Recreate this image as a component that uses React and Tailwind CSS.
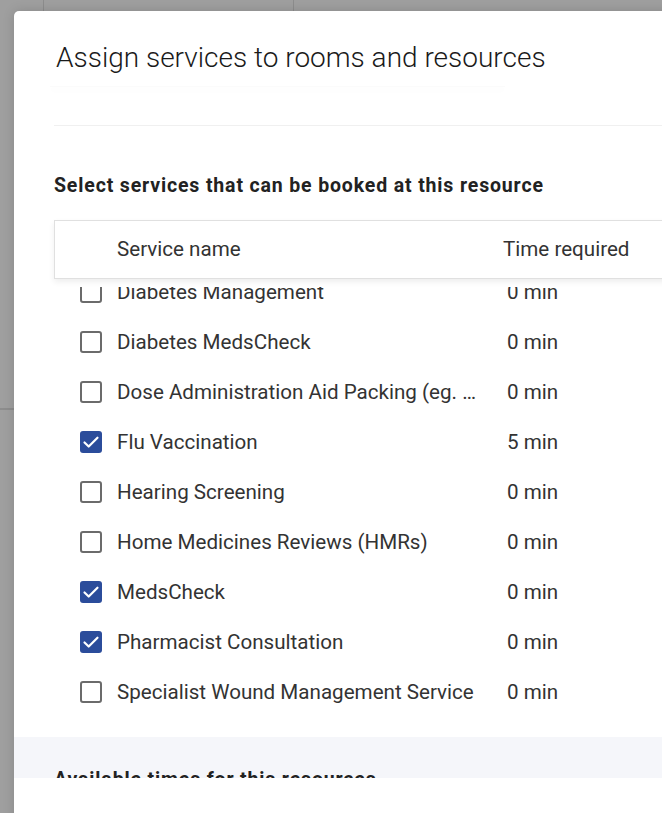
import { useState } from "react";

const services = [
  { name: "Diabetes Management", time: "0 min", checked: false },
  { name: "Diabetes MedsCheck", time: "0 min", checked: false },
  { name: "Dose Administration Aid Packing (eg. Webster-pak)", time: "0 min", checked: false },
  { name: "Flu Vaccination", time: "5 min", checked: true },
  { name: "Hearing Screening", time: "0 min", checked: false },
  { name: "Home Medicines Reviews (HMRs)", time: "0 min", checked: false },
  { name: "MedsCheck", time: "0 min", checked: true },
  { name: "Pharmacist Consultation", time: "0 min", checked: true },
  { name: "Specialist Wound Management Service", time: "0 min", checked: false },
];

function Checkbox({ checked, onClick }) {
  if (checked) {
    return (
      <button onClick={onClick} className="w-[22px] h-[22px] shrink-0 rounded-[3px] bg-[#2b4c9b] flex items-center justify-center">
        <svg width="22" height="22" viewBox="0 0 22 22" fill="none">
          <path d="M4.5 11.5l4.2 4 8.8-8.8" stroke="white" strokeWidth="2.2" strokeLinecap="round" strokeLinejoin="round" />
        </svg>
      </button>
    );
  }
  return <button onClick={onClick} className="w-[22px] h-[22px] shrink-0 rounded-[3px] border-2 border-[#6b6b6b] bg-white" />;
}

export default function App() {
  const [rows, setRows] = useState(services);

  const toggle = i => setRows(rows.map((r, j) => (j === i ? { ...r, checked: !r.checked } : r)));

  return (
    <div className="relative h-[813px] w-full overflow-hidden bg-[#9f9f9f] font-['Roboto',sans-serif]">
      {/* pagina de fondo */}
      <div className="flex h-full">
        <div className="w-[44px] border-r border-[#8d8d8d] flex flex-col">
          <div className="h-[410px] border-b-2 border-[#8d8d8d]" />
        </div>
        <div className="w-[250px] border-r border-[#8d8d8d]" />
      </div>

      {/* Modal */}
      <div className="absolute left-[14px] top-[11px] w-[720px] h-[900px] bg-white rounded-[5px] shadow-[0_0_12px_rgba(0,0,0,0.15)] flex flex-col">
        <div className="pt-[29px]">
          <h1 className="pl-[42px] h-[36px] leading-[36px] text-[28px] font-light text-[#1a1a1a]">
            Assign services to rooms and resources
          </h1>
          <div className="mt-[10px] ml-[36px] w-[455px] h-px bg-[#fbfbfb] shadow-[0_3px_6px_rgba(0,0,0,0.05)]" />
        </div>

        <div className="h-[691px] overflow-hidden">
          <div className="mt-[38px] ml-[40px] border-t border-[#f0f0f0]" />

          <div className="pl-[40px]">
            <h2 className="mt-[48px] h-[24px] leading-[24px] text-[19.5px] tracking-[0.85px] font-bold text-[#222]">
              Select services that can be booked at this resource
            </h2>

            <div className="mt-[22px]">
              <div className="relative z-10 bg-white pb-[8px]">
                <div className="h-[59px] flex items-center bg-white border border-[#e0e0e0] shadow-[0_3px_6px_rgba(0,0,0,0.07)] text-[20.6px] text-[#333]">
                  <div className="w-[448px] pl-[62px]">Service name</div>
                  <div>Time required</div>
                </div>
              </div>

              <div className="-mt-[20px]">
                {rows.map((r, i) => (
                  <div key={r.name} className="h-[50px] flex items-center pl-[26px] text-[20.6px] text-[#333]">
                    <Checkbox checked={r.checked} onClick={() => toggle(i)} />
                    <div className="ml-[15px] w-[390px] pr-[22px] truncate">{r.name}</div>
                    <div>{r.time}</div>
                  </div>
                ))}
              </div>
            </div>
          </div>

          <div className="mt-[20px] bg-[#f5f6fa] pl-[40px] pt-[31px] pb-[30px]">
            <h2 className="h-[24px] leading-[24px] text-[19.5px] tracking-[0.85px] font-bold text-[#222]">
              Available times for this resources
            </h2>
          </div>
        </div>

        <div className="flex-1 bg-white" />
      </div>
    </div>
  );
}
